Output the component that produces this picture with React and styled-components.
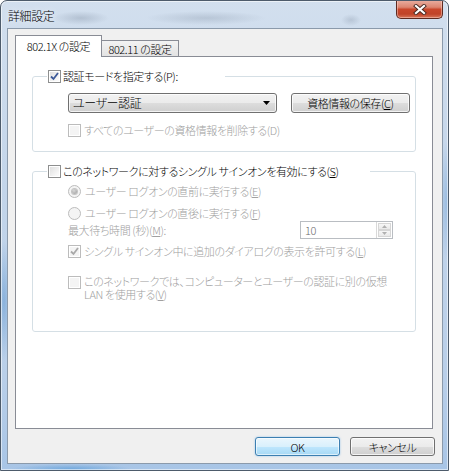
import React from "react";
import styled, { createGlobalStyle, css } from "styled-components";

const GlobalStyle = createGlobalStyle`
  html, body {
    margin: 0;
    padding: 0;
    background: #ffffff;
  }
  body {
    font-family: "Noto Sans CJK JP", "Liberation Sans", sans-serif;
    font-size: 11px;
    font-weight: 300;
    letter-spacing: -0.4px;
    font-feature-settings: "palt";
    color: #000;
  }
`;

// window frame (aero glass)
const Window = styled.div`
  width: 449px;
  height: 471px;
  box-sizing: border-box;
  border: 1px solid #4d5b6b;
  border-radius: 7px 7px 0 0;
  display: flex;
  flex-direction: column;
  overflow: hidden;
  box-shadow: inset 0 0 0 1px rgba(255, 255, 255, 0.55);
  background:
    radial-gradient(ellipse 28px 7px at 80px 17px, rgba(110, 125, 145, 0.3), transparent),
    radial-gradient(ellipse 60px 7px at 205px 17px, rgba(110, 125, 145, 0.25), transparent),
    radial-gradient(ellipse 10px 6px at 350px 19px, rgba(110, 125, 145, 0.25), transparent),
    radial-gradient(ellipse 8px 60px at 3px 300px, rgba(60, 130, 200, 0.4), transparent),
    radial-gradient(ellipse 8px 60px at 446px 200px, rgba(60, 130, 200, 0.3), transparent),
    radial-gradient(ellipse 60px 5px at 70px 468px, rgba(60, 140, 210, 0.5), transparent),
    linear-gradient(to bottom, #d2dfee 0%, #c3d5ea 40%, #b9cfe9 80%, #a8c5e6 100%);
`;

const TitleBar = styled.div`
  height: 27px;
  display: flex;
  align-items: flex-start;
  flex-shrink: 0;
`;

const Title = styled.div`
  padding: 7px 0 0 7px;
  font-size: 12px;
  line-height: 16px;
  flex: 1;
  text-shadow: 0 0 6px rgba(255, 255, 255, 0.9);
`;

const CloseButton = styled.div`
  width: 47px;
  height: 19px;
  margin: -1px 5px 0 0;
  box-sizing: border-box;
  border: 1px solid #5e2a20;
  border-top: none;
  border-radius: 0 0 5px 5px;
  display: flex;
  align-items: center;
  justify-content: center;
  background: linear-gradient(
    to bottom,
    #eab0a2 0%,
    #dc8570 40%,
    #c9472b 52%,
    #c04328 78%,
    #d8775a 100%
  );
  box-shadow: inset 0 0 0 1px rgba(255, 220, 210, 0.45);
`;

const Client = styled.div`
  flex: 1;
  margin: 0 5px 6px 6px;
  border: 1px solid #8b9aab;
  background: #f0f0f0;
  display: flex;
  flex-direction: column;
`;

const TabRow = styled.div`
  display: flex;
  align-items: flex-end;
  margin: 6px 0 0 7px;
  height: 21px;
`;

const Tab = styled.div`
  box-sizing: border-box;
  border: 1px solid #898c95;
  border-bottom: none;
  display: flex;
  align-items: center;
  justify-content: center;
  white-space: nowrap;
  ${(p) =>
    p.$active
      ? css`
          width: 87px;
          height: 22px;
          margin-bottom: -1px;
          padding-bottom: 2px;
          background: #ffffff;
          position: relative;
          z-index: 1;
        `
      : css`
          width: 78px;
          height: 16px;
          margin-left: -1px;
          background: linear-gradient(to bottom, #f3f3f3, #e3e3e3);
        `}
`;

const Panel = styled.div`
  margin-left: 7px;
  width: 418px;
  height: 373px;
  box-sizing: border-box;
  border: 1px solid #898c95;
  background: #ffffff;
  padding: 0 16px;
`;

const Group = styled.fieldset`
  margin: ${(p) => p.$top}px 0 0;
  padding: 0 0 ${(p) => p.$bottom}px 14px;
  border: 1px solid #d5dfe5;
  border-radius: 3px;
  min-width: 0;
`;

const Legend = styled.legend`
  padding: 0 ${(p) => p.$tail}px 0 1px;
  line-height: 16px;
  display: flex;
  align-items: center;
  gap: 2px;
  white-space: nowrap;
`;

const GroupBody = styled.div`
  padding: ${(p) => p.$top}px ${(p) => p.$right}px 0 21px;
  display: flex;
  flex-direction: column;
`;

const Row = styled.div`
  display: flex;
  align-items: ${(p) => (p.$top ? "flex-start" : "center")};
  gap: ${(p) => p.$gap ?? 3}px;
  margin-top: ${(p) => p.$mt ?? 0}px;
  min-height: 16px;
  line-height: 16px;
  white-space: nowrap;
  color: ${(p) => (p.$disabled ? "#a0a0a0" : "#000")};
`;

const Label = styled.span`
  line-height: ${(p) => p.$lh ?? 16}px;
`;

const U = styled.span`
  text-decoration: underline;
  text-underline-offset: 1px;
`;

const Box = styled.span`
  width: 13px;
  height: 13px;
  flex-shrink: 0;
  box-sizing: border-box;
  border: 1px solid ${(p) => (p.$disabled ? "#bcbcbc" : "#8e8f8f")};
  background: ${(p) =>
    p.$disabled
      ? "#f4f4f4"
      : "linear-gradient(135deg, #dcdcdc 0%, #f6f6f6 70%, #ffffff 100%)"};
  box-shadow: inset 0 0 0 1px #ffffff;
  display: flex;
  align-items: center;
  justify-content: center;
  margin-top: ${(p) => p.$mt ?? 0}px;
`;

const RadioCircle = styled.span`
  width: 13px;
  height: 13px;
  flex-shrink: 0;
  box-sizing: border-box;
  border-radius: 50%;
  border: 1px solid #bcbcbc;
  background: #f4f4f4;
  display: flex;
  align-items: center;
  justify-content: center;
`;

const RadioDot = styled.span`
  width: 5px;
  height: 5px;
  border-radius: 50%;
  background: radial-gradient(circle at 40% 35%, #d8d8d8, #9a9a9a);
  box-shadow: 0 0 0 1px #c4c4c4;
`;

const buttonFace = css`
  box-sizing: border-box;
  border: 1px solid #707070;
  border-radius: 3px;
  background: linear-gradient(
    to bottom,
    #f2f2f2 0%,
    #ebebeb 50%,
    #dddddd 51%,
    #cfcfcf 100%
  );
  box-shadow: inset 0 0 0 1px rgba(255, 255, 255, 0.75);
  height: 20px;
  display: flex;
  align-items: center;
  white-space: nowrap;
`;

const Combo = styled.div`
  ${buttonFace}
  width: 210px;
  padding: 0 6px 0 4px;
  justify-content: space-between;
  font-size: 12px;
`;

const Button = styled.div`
  ${buttonFace}
  width: ${(p) => p.$w}px;
  height: ${(p) => p.$h ?? 20}px;
  justify-content: center;
  ${(p) =>
    p.$default &&
    css`
      border-color: #3c7fb1;
      background: linear-gradient(
        to bottom,
        #eaf6fd 0%,
        #d9f0fc 50%,
        #bee6fd 51%,
        #a7d9f5 100%
      );
      box-shadow: inset 0 0 0 1px rgba(255, 255, 255, 0.6),
        0 0 2px rgba(80, 160, 230, 0.6);
    `}
`;

const Spin = styled.div`
  margin-left: auto;
  width: 93px;
  height: 18px;
  box-sizing: border-box;
  border: 1px solid #b9bdc2;
  background: #ffffff;
  display: flex;
  color: #6d6d6d;
`;

const SpinText = styled.div`
  flex: 1;
  padding-left: 4px;
  line-height: 16px;
`;

const SpinButtons = styled.div`
  width: 15px;
  display: flex;
  flex-direction: column;
  border-left: 1px solid #d9d9d9;
`;

const SpinArrow = styled.div`
  flex: 1;
  display: flex;
  align-items: center;
  justify-content: center;
  background: linear-gradient(to bottom, #f7f7f7, #e9e9e9);
  border: 1px solid #d6d6d6;
  margin: ${(p) => (p.$up ? "1px 1px 0 1px" : "0 1px 1px 1px")};
`;

const ButtonRow = styled.div`
  display: flex;
  justify-content: flex-end;
  gap: 10px;
  margin-top: 8px;
  padding-right: 7px;
`;

function Check({ checked, disabled, mt }) {
  return (
    <Box $disabled={disabled} $mt={mt}>
      {checked && (
        <svg width="9" height="9" viewBox="0 0 9 9">
          <path
            d="M1 4.5 L3.5 7 L8 1"
            fill="none"
            stroke={disabled ? "#a9a9a9" : "#3d5a99"}
            strokeWidth="1.8"
          />
        </svg>
      )}
    </Box>
  );
}

function Radio({ selected }) {
  return <RadioCircle>{selected && <RadioDot />}</RadioCircle>;
}

export default function App() {
  return (
    <>
      <GlobalStyle />
      <Window>
        <TitleBar>
          <Title>詳細設定</Title>
          <CloseButton>
            <svg width="14" height="11" viewBox="0 0 14 11">
              <path
                d="M3 2 L11 9 M11 2 L3 9"
                stroke="#4a2a22"
                strokeWidth="4"
                strokeLinecap="square"
              />
              <path
                d="M3 2 L11 9 M11 2 L3 9"
                stroke="#ffffff"
                strokeWidth="2.2"
                strokeLinecap="square"
              />
            </svg>
          </CloseButton>
        </TitleBar>

        <Client>
          <TabRow>
            <Tab $active>802.1X の設定</Tab>
            <Tab>802.11 の設定</Tab>
          </TabRow>

          <Panel>
            <Group $top={11} $bottom={13}>
              <Legend $tail={47}>
                <Check checked />
                <span>認証モードを指定する(P):</span>
              </Legend>
              <GroupBody $top={9} $right={5}>
                <Row $gap={14}>
                  <Combo>
                    <span>ユーザー認証</span>
                    <svg width="7" height="4" viewBox="0 0 7 4">
                      <path d="M0 0 H7 L3.5 4 Z" fill="#000" />
                    </svg>
                  </Combo>
                  <Button $w={120}>
                    資格情報の保存(<U>C</U>)
                  </Button>
                </Row>
                <Row $mt={9} $disabled>
                  <Check disabled />
                  <Label>すべてのユーザーの資格情報を削除する(D)</Label>
                </Row>
              </GroupBody>
            </Group>

            <Group $top={11} $bottom={30}>
              <Legend $tail={31}>
                <Check />
                <span>
                  このネットワークに対するシングル サインオンを有効にする(<U>S</U>)
                </span>
              </Legend>
              <GroupBody $top={4} $right={22}>
                <Row $gap={4} $disabled>
                  <Radio selected />
                  <Label>
                    ユーザー ログオンの直前に実行する(<U>E</U>)
                  </Label>
                </Row>
                <Row $gap={4} $mt={6} $disabled>
                  <Radio />
                  <Label>
                    ユーザー ログオンの直後に実行する(<U>F</U>)
                  </Label>
                </Row>
                <Row $disabled>
                  <Label>
                    最大待ち時間 (秒)(<U>M</U>):
                  </Label>
                  <Spin>
                    <SpinText>10</SpinText>
                    <SpinButtons>
                      <SpinArrow $up>
                        <svg width="5" height="3" viewBox="0 0 5 3">
                          <path d="M0 3 L2.5 0 L5 3 Z" fill="#b0b0b0" />
                        </svg>
                      </SpinArrow>
                      <SpinArrow>
                        <svg width="5" height="3" viewBox="0 0 5 3">
                          <path d="M0 0 L2.5 3 L5 0 Z" fill="#b0b0b0" />
                        </svg>
                      </SpinArrow>
                    </SpinButtons>
                  </Spin>
                </Row>
                <Row $mt={4} $disabled>
                  <Check checked disabled />
                  <Label>
                    シングル サインオン中に追加のダイアログの表示を許可する(<U>L</U>)
                  </Label>
                </Row>
                <Row $mt={16} $top $disabled>
                  <Check disabled mt={1} />
                  <Label $lh={13}>
                    このネットワークでは、コンピューターとユーザーの認証に別の仮想
                    <br />
                    LAN を使用する(<U>V</U>)
                  </Label>
                </Row>
              </GroupBody>
            </Group>
          </Panel>

          <ButtonRow>
            <Button $w={85} $h={19} $default>
              OK
            </Button>
            <Button $w={85} $h={19}>
              キャンセル
            </Button>
          </ButtonRow>
        </Client>
      </Window>
    </>
  );
}
